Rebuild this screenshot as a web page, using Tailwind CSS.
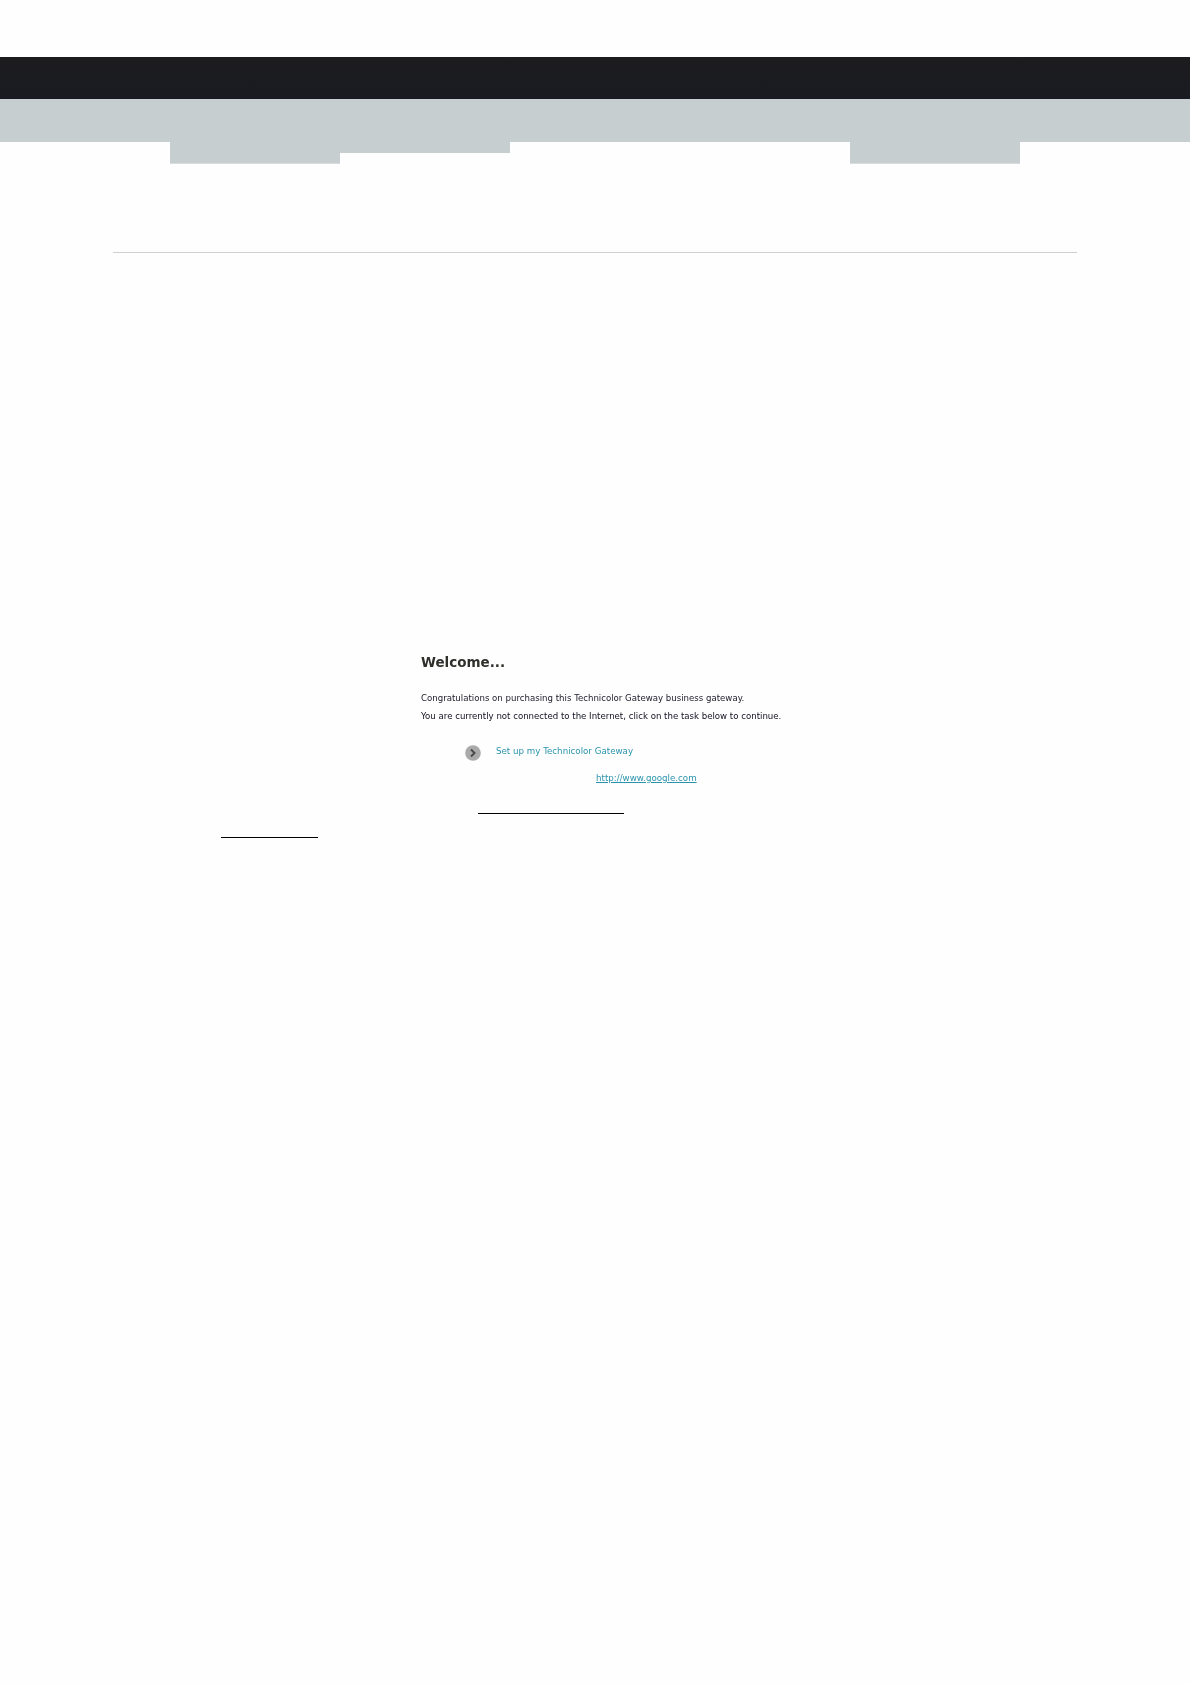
<!DOCTYPE html>
<html lang="en">
<head>
    <meta charset="UTF-8">
    <title>Welcome</title>
    <script src="https://cdn.jsdelivr.net/npm/@tailwindcss/browser@4"></script>
</head>
<body class="bg-[#fefefe] min-h-screen font-['DejaVu_Sans',sans-serif]">
    <!-- header bands -->
    <div class="pt-[57px]">
        <div class="h-[42px] bg-gradient-to-b from-[#1c1c1e] to-[#1a1b22]"></div>
        <div class="h-[43px] bg-[#c7cecf]"></div>
        <div class="flex items-start">
            <div class="w-[170px]"></div>
            <div class="w-[170px] h-[22px] bg-[#c7cecf] border-b border-[#d8dcdd]"></div>
            <div class="w-[170px] h-[11px] bg-[#c7cecf]"></div>
            <div class="w-[340px]"></div>
            <div class="w-[170px] h-[22px] bg-[#c7cecf] border-b border-[#d8dcdd]"></div>
        </div>
    </div>

    <!-- divider -->
    <div class="mt-[88px] mx-[113px] h-px bg-[#cfd0d1]"></div>

    <!-- welcome content -->
    <div class="pt-[401px] pl-[421px]">
        <h1 class="text-[13.5px] leading-[17px] font-bold text-[#2f2f2c] blur-[0.3px]">Welcome...</h1>
        <p class="mt-[18px] text-[8.6px] leading-[18px] text-[#1a1a2a] blur-[0.3px]">Congratulations on purchasing this Technicolor Gateway business gateway.</p>
        <p class="text-[8.6px] leading-[18px] text-[#101020] blur-[0.3px]">You are currently not connected to the Internet, click on the task below to continue.</p>

        <div class="mt-[20px] ml-[44px] flex items-center gap-[15px]">
            <svg class="w-[16px] h-[16px]" viewBox="0 0 16 16">
                <circle cx="8" cy="8" r="7.8" fill="#aaaaaa"/>
                <path d="M6 4.5 L9.5 8 L6 11.5" fill="none" stroke="#4a4a4a" stroke-width="2"/>
            </svg>
            <a class="text-[8.7px] leading-[12px] text-[#2a93ad] blur-[0.3px] -mt-[4px]">Set up my Technicolor Gateway</a>
        </div>

        <div class="mt-[11px] ml-[175px]">
            <a class="block text-[8.7px] leading-[12px] text-[#2a93ad] underline blur-[0.3px]">http://www.google.com</a>
        </div>
    </div>

    <!-- stray rules -->
    <div class="mt-[29px] ml-[478px] w-[146px] h-px bg-black"></div>
    <div class="mt-[23px] ml-[221px] w-[97px] h-px bg-black"></div>
</body>
</html>
